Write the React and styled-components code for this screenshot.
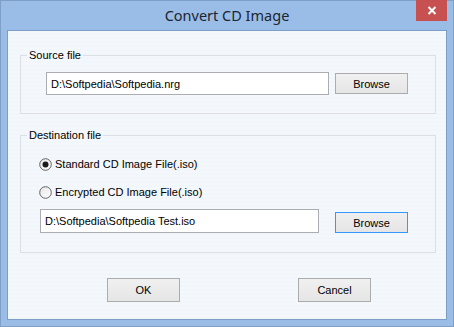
import React, { useState } from 'react';
import styled, { createGlobalStyle } from 'styled-components';

const GlobalStyle = createGlobalStyle`
  html, body {
    margin: 0;
    padding: 0;
    background: #99bde6;
  }
`;

const Window = styled.div`
  width: 454px;
  height: 327px;
  box-sizing: border-box;
  background: #99bde6;
  border: 1px solid #7f9fc7;
  padding: 0 6px 6px;
  display: flex;
  flex-direction: column;
  font-family: 'Liberation Sans', Arial, sans-serif;
`;

const TitleBar = styled.div`
  height: 29px;
  flex: none;
  display: flex;
  align-items: center;
  justify-content: center;
  position: relative;
`;

const Title = styled.div`
  font-family: 'Noto Sans', 'Open Sans', sans-serif;
  font-size: 14.5px;
  color: #1d2530;
  margin-top: -1px;
`;

const CloseButton = styled.div`
  position: absolute;
  top: -1px;
  right: 0;
  width: 31px;
  height: 21px;
  background: #c75050;
  display: flex;
  align-items: center;
  justify-content: center;
`;

const Client = styled.div`
  flex: 1;
  box-sizing: border-box;
  border: 1px solid #7d9ec7;
  background: repeating-linear-gradient(
    to bottom,
    #f4f8fc 0px,
    #f4f8fc 2px,
    #f1f6fb 2px,
    #f1f6fb 4px
  );
  padding: 18px 10px 0 12px;
  display: flex;
  flex-direction: column;
`;

const Group = styled.fieldset`
  margin: 0;
  padding: 0;
  border: 1px solid #dcdfe3;
  border-radius: 0;
  height: ${(p) => p.$height}px;
  box-sizing: border-box;
  margin-bottom: ${(p) => p.$gap || 0}px;
`;

const Legend = styled.legend`
  font-size: 11px;
  color: #000;
  padding: 0 2px;
  margin-left: 6px;
  line-height: 13px;
`;

const Row = styled.div`
  display: flex;
  align-items: ${(p) => p.$align || 'center'};
  padding-left: ${(p) => p.$indent}px;
  margin-top: ${(p) => p.$top}px;
  height: ${(p) => p.$h}px;
`;

const TextBox = styled.div`
  width: ${(p) => p.$width}px;
  height: ${(p) => p.$h}px;
  box-sizing: border-box;
  border: 1px solid #abadb3;
  background: #fff;
  font-size: 11px;
  color: #000;
  display: flex;
  align-items: center;
  padding-left: 4px;
`;

const PushButton = styled.button`
  width: 73px;
  height: ${(p) => p.$h || 21}px;
  box-sizing: border-box;
  margin-left: ${(p) => p.$left || 0}px;
  border: 1px solid ${(p) => (p.$focused ? '#3399ff' : '#acacac')};
  background: linear-gradient(to bottom, #f0f0f0, #e5e5e5);
  font-family: 'Liberation Sans', Arial, sans-serif;
  font-size: 11px;
  color: #000;
  padding: 0;
  border-radius: 0;
  cursor: default;
`;

const RadioLabel = styled.label`
  display: flex;
  align-items: center;
  gap: 3px;
  font-size: 11px;
  color: #000;
  height: 14px;
  padding-left: 18px;
  margin-top: ${(p) => p.$top}px;
`;

const Footer = styled.div`
  display: flex;
  justify-content: space-between;
  padding: 25px 65px 0 87px;
`;

const Radio = ({ checked }) => (
  <svg width="13" height="13" viewBox="0 0 13 13">
    <defs>
      <linearGradient id="rg" x1="0" y1="0" x2="1" y2="1">
        <stop offset="0" stopColor="#e6e6e6" />
        <stop offset="1" stopColor="#ffffff" />
      </linearGradient>
    </defs>
    <circle cx="6.5" cy="6.5" r="5.8" fill="url(#rg)" stroke="#555" strokeWidth="0.9" />
    {checked && <circle cx="6.5" cy="6.5" r="3" fill="#1a1a1a" />}
  </svg>
);

const App = () => {
  const [mode, setMode] = useState('standard');

  return (
    <>
      <GlobalStyle />
      <Window>
        <TitleBar>
          <Title>Convert CD Image</Title>
          <CloseButton>
            <svg width="10" height="9" viewBox="0 0 10 9">
              <path d="M1.5 1 L8.5 8 M8.5 1 L1.5 8" stroke="#fff" strokeWidth="2" />
            </svg>
          </CloseButton>
        </TitleBar>
        <Client>
          <Group $height={65} $gap={15}>
            <Legend>Source file</Legend>
            <Row $indent={25} $top={10} $h={23}>
              <TextBox $width={283} $h={23}>D:\Softpedia\Softpedia.nrg</TextBox>
              <PushButton $left={6}>Browse</PushButton>
            </Row>
          </Group>
          <Group $height={124}>
            <Legend>Destination file</Legend>
            <RadioLabel $top={15} onClick={() => setMode('standard')}>
              <Radio checked={mode === 'standard'} />
              Standard CD Image File(.iso)
            </RadioLabel>
            <RadioLabel $top={14} onClick={() => setMode('encrypted')}>
              <Radio checked={mode === 'encrypted'} />
              Encrypted CD Image File(.iso)
            </RadioLabel>
            <Row $indent={19} $top={10} $h={24} $align="flex-end">
              <TextBox $width={279} $h={24}>D:\Softpedia\Softpedia Test.iso</TextBox>
              <PushButton $left={16} $focused>Browse</PushButton>
            </Row>
          </Group>
          <Footer>
            <PushButton $h={24}>OK</PushButton>
            <PushButton $h={24}>Cancel</PushButton>
          </Footer>
        </Client>
      </Window>
    </>
  );
};

export default App;
